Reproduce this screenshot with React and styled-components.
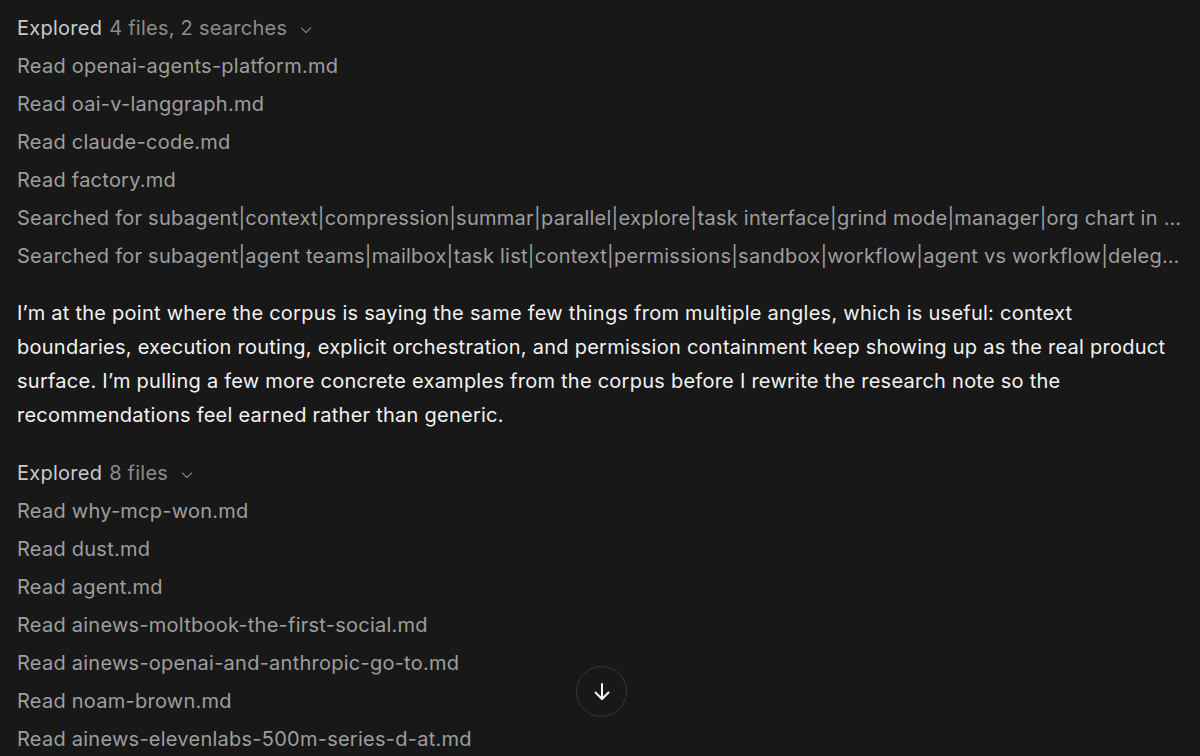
import React from 'react'
import styled, { createGlobalStyle } from 'styled-components'

const GlobalStyle = createGlobalStyle`
  html, body {
    margin: 0;
    padding: 0;
    background: #181818;
    height: 100%;
    overflow: hidden;
  }
  body {
    font-family: Inter, "Noto Sans", sans-serif;
    -webkit-font-smoothing: antialiased;
  }
`

const Page = styled.div`
  width: 1200px;
  height: 756px;
  background: #181818;
  position: relative;
  overflow: hidden;
`

const Transcript = styled.div`
  padding: 9px 17px 0 17px;
  width: 1166px;
  display: flex;
  flex-direction: column;
`

const Group = styled.div`
  display: flex;
  flex-direction: column;
`

const GroupHeader = styled.div`
  display: flex;
  align-items: center;
  height: 38px;
  font-size: 20px;
  letter-spacing: 0.25px;
  color: #cacaca;
  gap: 7px;
`

const Count = styled.span`
  color: #8c8c8c;
`

const Chevron = styled.svg`
  width: 14px;
  height: 14px;
  margin-left: 5px;
  margin-top: 4px;
  color: #8c8c8c;
`

const Row = styled.div`
  height: 38px;
  line-height: 38px;
  font-size: 20px;
  letter-spacing: 0.25px;
  color: #9e9e9e;
  white-space: nowrap;
  overflow: hidden;
  text-overflow: ellipsis;
`

const Message = styled.p`
  margin: 21px 0 22px 0;
  font-size: 20px;
  letter-spacing: 0.25px;
  line-height: 34px;
  color: #f2f2f2;
`

const ScrollButton = styled.button`
  position: absolute;
  left: 576px;
  top: 666px;
  width: 51px;
  height: 51px;
  border-radius: 50%;
  border: 1px solid #363636;
  background: #181818;
  color: #f5f5f5;
  display: flex;
  align-items: center;
  justify-content: center;
  padding: 0;
  cursor: pointer;
`

function ChevronDown() {
  return (
    <Chevron viewBox="0 0 24 24" fill="none" stroke="currentColor" strokeWidth="1.8" strokeLinecap="round" strokeLinejoin="round">
      <path d="M4 8.5l8 8 8-8" />
    </Chevron>
  )
}

function ExploredGroup({ label, count, items }) {
  return (
    <Group>
      <GroupHeader>
        <span>{label}</span>
        <Count>{count}</Count>
        <ChevronDown />
      </GroupHeader>
      {items.map((item) => (
        <Row key={item}>{item}</Row>
      ))}
    </Group>
  )
}

const first = [
  'Read openai-agents-platform.md',
  'Read oai-v-langgraph.md',
  'Read claude-code.md',
  'Read factory.md',
  'Searched for subagent|context|compression|summar|parallel|explore|task interface|grind mode|manager|org chart in codex and claude code',
  'Searched for subagent|agent teams|mailbox|task list|context|permissions|sandbox|workflow|agent vs workflow|delegation patterns',
]

const second = [
  'Read why-mcp-won.md',
  'Read dust.md',
  'Read agent.md',
  'Read ainews-moltbook-the-first-social.md',
  'Read ainews-openai-and-anthropic-go-to.md',
  'Read noam-brown.md',
  'Read ainews-elevenlabs-500m-series-d-at.md',
]

export default function App() {
  return (
    <Page>
      <GlobalStyle />
      <Transcript>
        <ExploredGroup label="Explored" count="4 files, 2 searches" items={first} />
        <Message>
          I’m at the point where the corpus is saying the same few things from multiple angles, which is useful: context
          boundaries, execution routing, explicit orchestration, and permission containment keep showing up as the real product
          surface. I’m pulling a few more concrete examples from the corpus before I rewrite the research note so the
          recommendations feel earned rather than generic.
        </Message>
        <ExploredGroup label="Explored" count="8 files" items={second} />
      </Transcript>
      <ScrollButton aria-label="Scroll to bottom">
        <svg width="24" height="24" viewBox="0 0 24 24" fill="none" stroke="currentColor" strokeWidth="2" strokeLinecap="round" strokeLinejoin="round">
          <path d="M12 4v15" />
          <path d="M5.5 12.5L12 19l6.5-6.5" />
        </svg>
      </ScrollButton>
    </Page>
  )
}
